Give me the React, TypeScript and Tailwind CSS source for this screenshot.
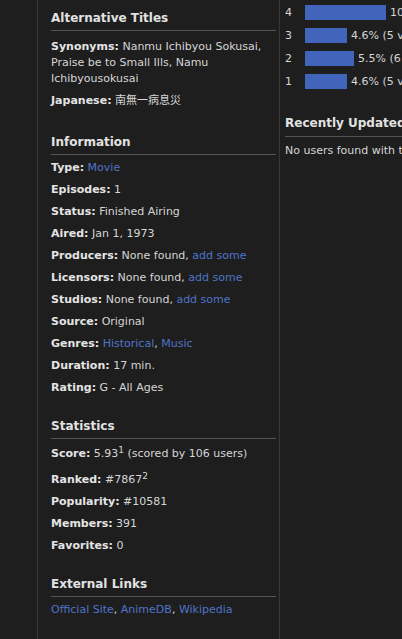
import type { ReactNode } from 'react';

const link = 'text-[#4f74c8]';

function Heading({ children, className = '' }: { children: ReactNode; className?: string }) {
  return (
    <h2
      className={`border-b border-[#555] pb-[3px] text-[12px] leading-[17px] font-bold text-[#e2e2e2] ${className}`}
    >
      {children}
    </h2>
  );
}

function Row({ label, children, className = '' }: { label: string; children: ReactNode; className?: string }) {
  return (
    <div className={`py-[3px] leading-[16px] text-[#d6d6d6] ${className}`}>
      <span className="font-bold text-[#e4e4e4]">{label}:</span> {children}
    </div>
  );
}

const votes = [
  { n: 4, w: 81, text: '10.1% (11 votes)' },
  { n: 3, w: 42, text: '4.6% (5 votes)' },
  { n: 2, w: 49, text: '5.5% (6 votes)' },
  { n: 1, w: 42, text: '4.6% (5 votes)' },
];

export default function App() {
  return (
    <div className="flex h-[639px] w-[402px] overflow-hidden bg-[#1e1e1e] font-['DejaVu_Sans','Noto_Sans_CJK_JP',sans-serif] text-[11px]">
      <div className="w-[37px] shrink-0" />

      <aside className="w-[243px] shrink-0 border-x border-[#383838] pt-[10px] pr-[3px] pl-[13px]">
        <Heading>Alternative Titles</Heading>
        <Row label="Synonyms" className="mt-[5px]">
          Nanmu Ichibyou Sokusai, Praise be to Small Ills, Namu Ichibyousokusai
        </Row>
        <Row label="Japanese">南無一病息災</Row>

        <Heading className="mt-[22px]">Information</Heading>
        <div className="mt-[2px]">
          <Row label="Type">
            <span className={link}>Movie</span>
          </Row>
          <Row label="Episodes">1</Row>
          <Row label="Status">Finished Airing</Row>
          <Row label="Aired">Jan 1, 1973</Row>
          <Row label="Producers">
            None found, <span className={link}>add some</span>
          </Row>
          <Row label="Licensors">
            None found, <span className={link}>add some</span>
          </Row>
          <Row label="Studios">
            None found, <span className={link}>add some</span>
          </Row>
          <Row label="Source">Original</Row>
          <Row label="Genres">
            <span className={link}>Historical</span>, <span className={link}>Music</span>
          </Row>
          <Row label="Duration">17 min.</Row>
          <Row label="Rating">G - All Ages</Row>
        </div>

        <Heading className="mt-[19px]">Statistics</Heading>
        <div className="mt-[4px]">
          <Row label="Score" className="mb-[4px]">
            5.93<sup className="text-[9px] leading-none">1</sup> (scored by 106 users)
          </Row>
          <Row label="Ranked">
            #7867<sup className="text-[9px] leading-none">2</sup>
          </Row>
          <Row label="Popularity">#10581</Row>
          <Row label="Members">391</Row>
          <Row label="Favorites">0</Row>
        </div>

        <Heading className="mt-[19px]">External Links</Heading>
        <div className="mt-[2px] py-[3px] leading-[16px] text-[#d6d6d6]">
          <span className={link}>Official Site</span>, <span className={link}>AnimeDB</span>,{' '}
          <span className={link}>Wikipedia</span>
        </div>
      </aside>

      <main className="min-w-0 flex-1 overflow-hidden pl-[5px] whitespace-nowrap">
        <div className="flex flex-col gap-[8px] pt-[5px]">
          {votes.map((v) => (
            <div key={v.n} className="flex h-[15px] items-center text-[#d6d6d6]">
              <span className="w-[20px] shrink-0 leading-[15px]">{v.n}</span>
              <span className="h-[15px] shrink-0 bg-[#4065ba]" style={{ width: v.w }} />
              <span className="ml-[4px] leading-[15px]">{v.text}</span>
            </div>
          ))}
        </div>

        <h2 className="mt-[26px] border-b border-[#555] pb-[4px] text-[12px] leading-[17px] font-bold text-[#e2e2e2]">
          Recently Updated by
        </h2>
        <div className="mt-[3px] py-[3px] leading-[16px] text-[#d6d6d6]">No users found with this anime</div>
      </main>
    </div>
  );
}
